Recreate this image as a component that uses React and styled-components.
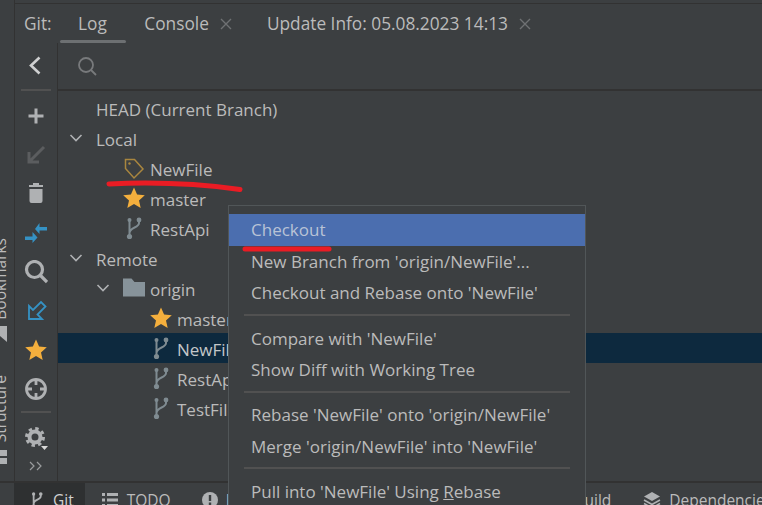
import styled, { createGlobalStyle } from "styled-components";

const GlobalStyle = createGlobalStyle`
  html, body {
    margin: 0;
    padding: 0;
    background: #3c3f41;
  }
`;

const Window = styled.div`
  position: relative;
  width: 762px;
  height: 505px;
  overflow: hidden;
  display: flex;
  flex-direction: column;
  background: #3c3f41;
  color: #bbbbbb;
  font-family: "Open Sans", "Noto Sans", sans-serif;
  font-size: 17px;
`;

const TopLine = styled.div`
  height: 3px;
  flex: none;
  margin-left: 15px;
  border-bottom: 1px solid #323232;
`;

const Main = styled.div`
  flex: 1;
  min-height: 0;
  display: flex;
`;

const Stripe = styled.div`
  width: 14px;
  flex: none;
  overflow: hidden;
  display: flex;
  flex-direction: column;
  padding-top: 238px;
  border-right: 1px solid #323232;
  margin-top: -4px;
`;

const StripeLabel = styled.div`
  writing-mode: vertical-rl;
  transform: rotate(180deg);
  width: 22px;
  margin-left: -11px;
  margin-top: ${(p) => p.$top || 0}px;
  line-height: 22px;
  font-size: 15.5px;
  white-space: nowrap;
  flex: none;
`;

const StripeIcon = styled.svg`
  display: block;
  flex: none;
  margin-top: ${(p) => p.$top}px;
`;

const Panel = styled.div`
  flex: 1;
  min-width: 0;
  display: flex;
  flex-direction: column;
`;

const Header = styled.div`
  height: 39px;
  flex: none;
  display: flex;
  align-items: center;
  padding-left: 9px;
  font-size: 17.3px;
`;

const HeaderLabel = styled.span`
  width: 36px;
  flex: none;
`;

const HeaderTab = styled.div`
  position: relative;
  height: 39px;
  display: flex;
  align-items: center;
  padding: 0 ${(p) => p.$right || 18}px 0 18px;
  gap: 11px;
  white-space: nowrap;

  ${(p) =>
    p.$active &&
    `&::after {
      content: "";
      position: absolute;
      left: 0;
      right: 0;
      bottom: 0;
      height: 3px;
      border-radius: 2px;
      background: #6d7072;
    }`}
`;

const Body = styled.div`
  flex: 1;
  min-height: 0;
  display: flex;
`;

const Toolbar = styled.div`
  width: 42px;
  flex: none;
  display: flex;
  flex-direction: column;
  align-items: center;
  border-right: 1px solid #323232;
`;

const ToolButton = styled.div`
  height: ${(p) => p.$height || 39}px;
  width: 100%;
  flex: none;
  display: flex;
  align-items: center;
  justify-content: center;
`;

const ToolSeparator = styled.div`
  width: 30px;
  height: 2px;
  flex: none;
  margin: ${(p) => p.$margin};
  background: #515151;
`;

const Content = styled.div`
  flex: 1;
  min-width: 0;
  display: flex;
  flex-direction: column;
`;

const SearchRow = styled.div`
  height: 48px;
  flex: none;
  display: flex;
  align-items: center;
  padding-left: 18px;
  box-sizing: border-box;
  border-bottom: 2px solid #323232;
`;

const Tree = styled.div`
  padding-top: 2px;
  display: flex;
  flex-direction: column;
`;

const Row = styled.div`
  height: 30px;
  flex: none;
  display: flex;
  align-items: center;
  padding-left: ${(p) => p.$indent}px;
  background: ${(p) => (p.$selected ? "#0d293e" : "transparent")};
  color: ${(p) => (p.$selected ? "#c4c7c9" : "#bbbbbb")};
  white-space: nowrap;
`;

const Disclosure = styled.svg`
  width: 20px;
  height: 20px;
  flex: none;
  margin-right: ${(p) => p.$right}px;
`;

const NodeIcon = styled.svg`
  width: 24px;
  height: 24px;
  flex: none;
  margin-right: 4px;
`;

const RowText = styled.span`
  position: relative;
  top: 1px;
`;

const BottomBar = styled.div`
  height: 24px;
  flex: none;
  display: flex;
  align-items: flex-start;
  overflow: hidden;
  border-top: 2px solid #323232;
  box-sizing: border-box;
  padding-left: 14px;
`;

const BottomTab = styled.div`
  height: 33px;
  flex: none;
  display: flex;
  align-items: center;
  gap: ${(p) => p.$gap || 8}px;
  padding: 0 ${(p) => p.$right || 12}px 0 ${(p) => p.$left}px;
  background: ${(p) => (p.$active ? "#2e3031" : "transparent")};
  font-size: 15.5px;
  white-space: nowrap;
  color: ${(p) => (p.$active ? "#d0d0d0" : "#bbbbbb")};
`;

const Popup = styled.div`
  position: absolute;
  left: 228px;
  top: 205px;
  width: 356px;
  height: 310px;
  padding-top: 8px;
  border: 1px solid #515658;
  background: #3c3f41;
  z-index: 2;
`;

const MenuItem = styled.div`
  height: 31.5px;
  line-height: 31.5px;
  padding-left: 22px;
  white-space: nowrap;
  background: ${(p) => (p.$active ? "#4b6eaf" : "transparent")};
  color: ${(p) => (p.$active ? "#b9c3d6" : "#bbbbbb")};
`;

const MenuSeparator = styled.div`
  height: 2px;
  margin: 5px 15px ${(p) => p.$bottom}px;
  background: #515151;
`;

const Scribbles = styled.svg`
  position: absolute;
  left: 0;
  top: 0;
  z-index: 3;
  pointer-events: none;
`;

const GREY = "#afb1b3";
const BLUE = "#3592c4";
const STAR = "#f4af3d";
const BRANCH = "#7f8b91";
const STAR_PATH = "M12 1.5 L15.1 8.6 L22.8 9.3 L17 14.4 L18.7 22 L12 18 L5.3 22 L7 14.4 L1.2 9.3 L8.9 8.6 Z";

const Close = () => (
  <svg width="12" height="12" viewBox="0 0 12 12" fill="none" stroke="#6f7173" strokeWidth="1.4">
    <path d="M1 1 L11 11 M11 1 L1 11" />
  </svg>
);

const Chevron = ({ right }) => (
  <Disclosure $right={right} viewBox="0 0 20 20" fill="none" stroke={GREY} strokeWidth="1.6">
    <path d="M4.5 7 L10 12.5 L15.5 7" />
  </Disclosure>
);

const TagIcon = () => (
  <NodeIcon viewBox="0 0 24 24" fill="none" stroke="#a9863f" strokeWidth="1.5">
    <path d="M3.5 3.5 H12.5 L21 13 L12 22 L3.5 12.5 Z" />
    <circle cx="7.5" cy="7.5" r="1.2" fill="#a9863f" stroke="none" />
  </NodeIcon>
);

const StarNode = () => (
  <NodeIcon viewBox="0 0 24 24" fill={STAR}>
    <path d={STAR_PATH} />
  </NodeIcon>
);

const BranchNode = () => (
  <NodeIcon viewBox="0 0 24 24" fill={BRANCH} stroke={BRANCH}>
    <path d="M7.5 3 V21 M17 4 V7 C17 12 7.5 11 7.5 17" fill="none" strokeWidth="2" />
    <circle cx="7.5" cy="4" r="2" stroke="none" />
    <circle cx="17" cy="4" r="2.4" stroke="none" />
    <circle cx="7.5" cy="20.5" r="2.6" stroke="none" />
  </NodeIcon>
);

const FolderNode = () => (
  <NodeIcon viewBox="0 0 24 24" fill="#87939a">
    <path d="M1 2.5 H9.5 L12.5 6 H23 V20.5 H1 Z" />
  </NodeIcon>
);

const treeRows = [
  { label: "HEAD (Current Branch)", indent: 38 },
  { label: "Local", indent: 8, chevron: 10 },
  { label: "NewFile", indent: 64, icon: <TagIcon /> },
  { label: "master", indent: 64, icon: <StarNode /> },
  { label: "RestApi", indent: 64, icon: <BranchNode /> },
  { label: "Remote", indent: 8, chevron: 10 },
  { label: "origin", indent: 35, chevron: 9, icon: <FolderNode /> },
  { label: "master", indent: 91, icon: <StarNode /> },
  { label: "NewFile", indent: 91, icon: <BranchNode />, selected: true },
  { label: "RestApi", indent: 91, icon: <BranchNode /> },
  { label: "TestFile", indent: 91, icon: <BranchNode /> },
];

export default function App() {
  return (
    <Window>
      <GlobalStyle />
      <TopLine />
      <Main>
        <Stripe>
          <StripeLabel>Bookmarks</StripeLabel>
          <StripeIcon $top={6} width="14" height="17" viewBox="0 0 14 17" fill={GREY}>
            <path d="M0 0 H7 V16 L0 10 Z" />
          </StripeIcon>
          <StripeLabel $top={32}>Structure</StripeLabel>
          <StripeIcon $top={8} width="14" height="15" viewBox="0 0 14 15" fill={GREY}>
            <path d="M0 0 H7 V6 H0 Z M0 8 H7 V14 H0 Z" />
          </StripeIcon>
        </Stripe>
        <Panel>
          <Header>
            <HeaderLabel>Git:</HeaderLabel>
            <HeaderTab $active $right={19.5}>Log</HeaderTab>
            <HeaderTab $right={17}>
              Console
              <Close />
            </HeaderTab>
            <HeaderTab>
              Update Info: 05.08.2023 14:13
              <Close />
            </HeaderTab>
          </Header>
          <Body>
            <Toolbar>
              <ToolButton $height={46}>
                <svg width="24" height="24" viewBox="0 0 24 24" fill="none" stroke="#cfd0d1" strokeWidth="2.6">
                  <path d="M15.5 3.5 L7 11.5 L15.5 19.5" />
                </svg>
              </ToolButton>
              <ToolSeparator $margin="0 0 5px" />
              <ToolButton>
                <svg width="24" height="24" viewBox="0 0 24 24" fill="none" stroke={GREY} strokeWidth="3">
                  <path d="M12 4.5 V19.5 M4.5 12 H19.5" />
                </svg>
              </ToolButton>
              <ToolButton>
                <svg width="24" height="24" viewBox="0 0 24 24" fill="none" stroke="#5b5d5f" strokeWidth="3">
                  <path d="M20 4 L6 18 M5 9 V19 H15" />
                </svg>
              </ToolButton>
              <ToolButton>
                <svg width="24" height="24" viewBox="0 0 24 24" fill={GREY}>
                  <path d="M5 3 H9 V1 H15 V3 H19 V5 H5 Z M5.5 7 H18.5 V19 Q18.5 21 16.5 21 H7.5 Q5.5 21 5.5 19 Z" />
                </svg>
              </ToolButton>
              <ToolButton>
                <svg width="24" height="24" viewBox="0 0 24 24" fill={BLUE}>
                  <path d="M11 8 L15.5 2 V6 H23 V9.5 H15.5 V13 Z M13.5 16.5 L8.5 22 V19 H1 V15.5 H8.5 V11 Z" />
                </svg>
              </ToolButton>
              <ToolButton>
                <svg width="24" height="24" viewBox="0 0 24 24" fill="none" stroke={GREY} strokeWidth="3.2">
                  <circle cx="10.5" cy="9.5" r="8" />
                  <path d="M16 15 L23 22" />
                </svg>
              </ToolButton>
              <ToolButton>
                <svg width="24" height="24" viewBox="0 0 24 24" fill="none" stroke={BLUE} strokeWidth="1.8">
                  <path d="M5 20 V7 L9 11 L17 3 L21.5 7.5 L13.5 15.5 L18 20 Z" />
                </svg>
              </ToolButton>
              <ToolButton>
                <svg width="24" height="24" viewBox="0 0 24 24" fill={STAR}>
                  <path d={STAR_PATH} />
                </svg>
              </ToolButton>
              <ToolButton>
                <svg width="24" height="24" viewBox="0 0 24 24" fill="none" stroke={GREY} strokeWidth="2.8">
                  <circle cx="12" cy="12" r="9.5" />
                  <path d="M12 2 V8 M12 16 V22 M2 12 H8 M16 12 H22" />
                </svg>
              </ToolButton>
              <ToolSeparator $margin="3px 0 9px" />
              <ToolButton $height={34}>
                <svg width="26" height="26" viewBox="0 0 26 26" fill="none" stroke={GREY}>
                  <circle cx="12" cy="11" r="5.5" strokeWidth="4" />
                  <circle cx="12" cy="11" r="8.5" strokeWidth="3" strokeDasharray="3.4 3.27" />
                  <path d="M18 20 H25 L21.5 24 Z" fill="#d8d8d8" stroke="none" />
                </svg>
              </ToolButton>
              <ToolButton $height={20}>
                <svg width="14" height="10" viewBox="0 0 14 10" fill="none" stroke="#9a9c9e" strokeWidth="1.2">
                  <path d="M1 1 L5 5 L1 9 M8 1 L12 5 L8 9" />
                </svg>
              </ToolButton>
            </Toolbar>
            <Content>
              <SearchRow>
                <svg width="22" height="22" viewBox="0 0 22 22" fill="none" stroke="#787a7c" strokeWidth="1.8">
                  <circle cx="10" cy="10" r="7" />
                  <path d="M15 15 L20 20" />
                </svg>
              </SearchRow>
              <Tree>
                {treeRows.map((row, index) => (
                  <Row key={index} $indent={row.indent} $selected={row.selected}>
                    {row.chevron && <Chevron right={row.chevron} />}
                    {row.icon}
                    <RowText>{row.label}</RowText>
                  </Row>
                ))}
              </Tree>
            </Content>
          </Body>
        </Panel>
      </Main>
      <BottomBar>
        <BottomTab $active $left={14} $right={11} $gap={7}>
          <svg width="18" height="20" viewBox="0 0 24 24" fill={GREY} stroke={GREY}>
            <path d="M7.5 3 V21 M17 4 V7 C17 12 7.5 11 7.5 17" fill="none" strokeWidth="2.4" />
            <circle cx="7.5" cy="4" r="2.2" stroke="none" />
            <circle cx="17" cy="4" r="2.4" stroke="none" />
            <circle cx="7.5" cy="20.5" r="2.6" stroke="none" />
          </svg>
          Git
        </BottomTab>
        <BottomTab $left={17} $gap={9}>
          <svg width="16" height="16" viewBox="0 0 16 16" fill={GREY}>
            <path d="M0 1 H3 V4 H0 Z M5 1 H16 V4 H5 Z M0 6.5 H3 V9.5 H0 Z M5 6.5 H16 V9.5 H5 Z M0 12 H3 V15 H0 Z M5 12 H16 V15 H5 Z" />
          </svg>
          TODO
        </BottomTab>
        <BottomTab $left={19}>
          <svg width="16" height="16" viewBox="0 0 16 16">
            <circle cx="8" cy="8" r="8" fill={GREY} />
            <path d="M6.8 3 H9.2 V9 H6.8 Z M6.8 10.5 H9.2 V13 H6.8 Z" fill="#3c3f41" />
          </svg>
          Problems
        </BottomTab>
        <BottomTab $left={268} $right={32}>Build</BottomTab>
        <BottomTab $left={0} $gap={8}>
          <svg width="18" height="18" viewBox="0 0 18 18" fill={GREY}>
            <path d="M9 1 L17 5.5 L9 10 L1 5.5 Z" />
            <path d="M1 9 L9 13.5 L17 9 M1 12.5 L9 17 L17 12.5" fill="none" stroke={GREY} strokeWidth="1.6" />
          </svg>
          Dependencies
        </BottomTab>
      </BottomBar>
      <Popup>
        <MenuItem $active>Checkout</MenuItem>
        <MenuItem>New Branch from 'origin/NewFile'...</MenuItem>
        <MenuItem>Checkout and Rebase onto 'NewFile'</MenuItem>
        <MenuSeparator $bottom={7} />
        <MenuItem>Compare with 'NewFile'</MenuItem>
        <MenuItem>Show Diff with Working Tree</MenuItem>
        <MenuSeparator $bottom={6.5} />
        <MenuItem>Rebase 'NewFile' onto 'origin/NewFile'</MenuItem>
        <MenuItem>Merge 'origin/NewFile' into 'NewFile'</MenuItem>
        <MenuSeparator $bottom={7} />
        <MenuItem>
          Pull into 'NewFile' Using <u>R</u>ebase
        </MenuItem>
      </Popup>
      <Scribbles width="762" height="505" fill="none" stroke="#ea1c24" strokeWidth="5" strokeLinecap="round">
        <path d="M109 184 C150 182 200 184 240 189.5" />
        <path d="M245 249 H329" />
      </Scribbles>
    </Window>
  );
}
